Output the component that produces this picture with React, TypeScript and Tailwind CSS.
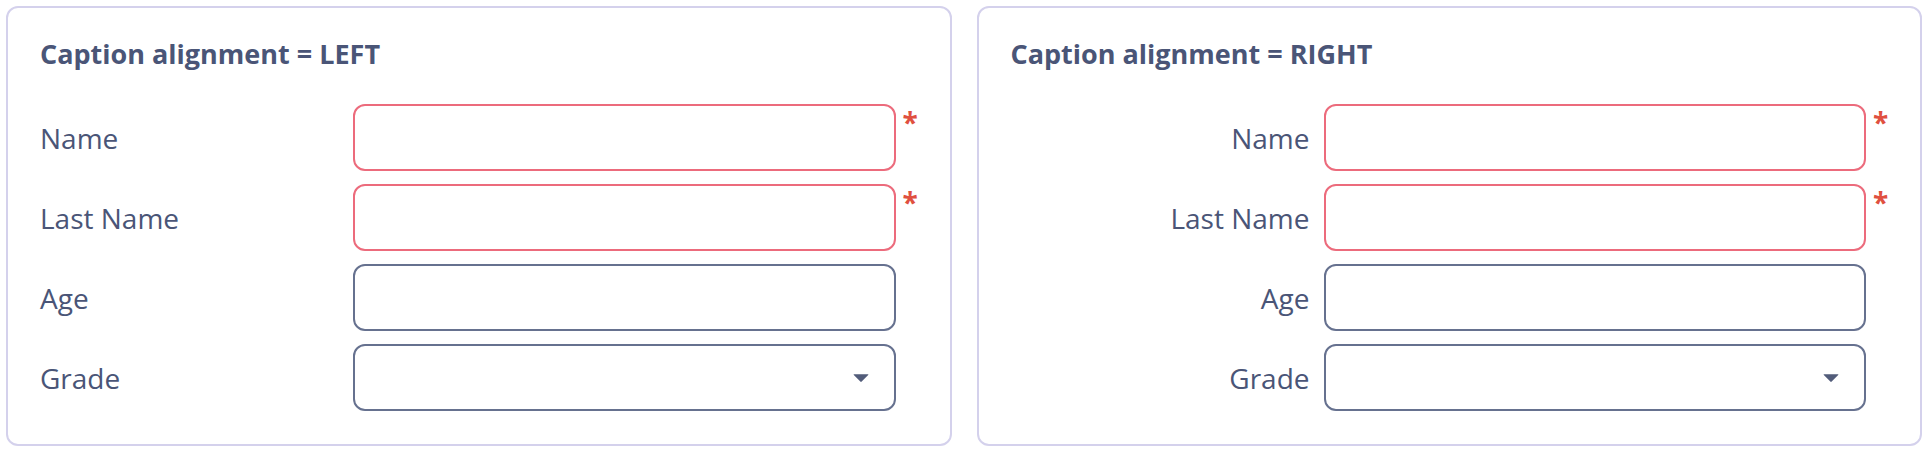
import React from "react";

interface Field {
  label: string;
  required?: boolean;
  select?: boolean;
}

const fields: Field[] = [
  { label: "Name", required: true },
  { label: "Last Name", required: true },
  { label: "Age" },
  { label: "Grade", select: true },
];

function FormCard({ title, align }: { title: string; align: "left" | "right" }) {
  return (
    <div className="flex-1 rounded-[12px] border-2 border-[#d4d1ec] bg-white px-8 pt-8 pb-[33px]">
      <h2 className="mb-9 text-[27px] font-bold leading-[28px] text-[#4a5577]">{title}</h2>
      <div className="flex flex-col gap-[13px]">
        {fields.map((f) => (
          <div key={f.label} className="flex items-center">
            {/* caption */}
            <label
              className={
                align === "right"
                  ? "w-[299px] shrink-0 text-right text-[28px] text-[#4a5577]"
                  : "w-[299px] shrink-0 text-left text-[28px] text-[#4a5577]"
              }
            >
              {f.label}
            </label>
            <div
              className={
                f.required
                  ? "ml-[14px] flex h-[67px] flex-1 items-center justify-end rounded-[12px] border-2 border-[#ec6b7c] bg-white"
                  : "ml-[14px] flex h-[67px] flex-1 items-center justify-end rounded-[12px] border-2 border-[#66718f] bg-white"
              }
            >
              {f.select && (
                <svg width="16" height="10" viewBox="0 0 16 10" className="mr-[25px]">
                  <path d="M1 1.2 L15 1.2 Q15.8 1.2 15.2 1.9 L8.7 8.6 Q8 9.3 7.3 8.6 L0.8 1.9 Q0.2 1.2 1 1.2 Z" fill="#525c7a" />
                </svg>
              )}
            </div>
            {/* required marker */}
            <div className="flex h-[67px] w-[22px] shrink-0 items-start pl-[7px]">
              {f.required && (
                <span className="mt-[4px] text-[28px] font-bold leading-[28px] text-[#e0503f]">*</span>
              )}
            </div>
          </div>
        ))}
      </div>
    </div>
  );
}

export default function App() {
  return (
    <div className="flex h-[456px] w-[1928px] items-start gap-[25px] bg-white px-[6px] pt-[6px] font-['Open_Sans',sans-serif]">
      <FormCard title="Caption alignment = LEFT" align="left" />
      <FormCard title="Caption alignment = RIGHT" align="right" />
    </div>
  );
}
